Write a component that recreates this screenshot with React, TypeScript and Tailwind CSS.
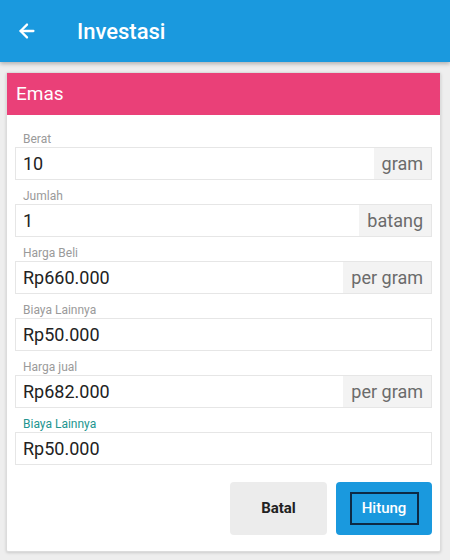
import React from "react";
import { ArrowLeft } from "lucide-react";

type Field = {
  label: string;
  value: string;
  addon?: string;
  active?: boolean;
};

const fields: Field[] = [
  { label: "Berat", value: "10", addon: "gram" },
  { label: "Jumlah", value: "1", addon: "batang" },
  { label: "Harga Beli", value: "Rp660.000", addon: "per gram" },
  { label: "Biaya Lainnya", value: "Rp50.000" },
  { label: "Harga jual", value: "Rp682.000", addon: "per gram" },
  { label: "Biaya Lainnya", value: "Rp50.000", active: true },
];

const FormField: React.FC<{ field: Field }> = ({ field }) => (
  <div className="flex flex-col">
    <label
      className={`h-[16px] pl-[8px] text-[12px] leading-[16px] ${
        field.active ? "text-[#22958f]" : "text-[#9a9a9a]"
      }`}
    >
      {field.label}
    </label>
    <div className="flex h-[33px] border border-[#e6e6e6] bg-white">
      <div className="flex flex-1 items-center pl-[7px] text-[18px] text-[#222]">
        {field.value}
      </div>
      {field.addon && (
        <div className="flex items-center bg-[#f3f3f3] px-[8px] text-[18px] text-[#6b6b6b]">
          {field.addon}
        </div>
      )}
    </div>
  </div>
);

const App: React.FC = () => {
  return (
    <div className="h-[560px] w-[450px] overflow-hidden bg-[#eeeeee] font-['Roboto',sans-serif]">
      <header className="relative z-10 flex h-[62px] items-center bg-[#1a99de] shadow-[0_2px_4px_rgba(0,0,0,0.25)]">
        <ArrowLeft className="ml-[16px] h-[22px] w-[22px] text-white" strokeWidth={2.5} />
        <h1 className="ml-[39px] text-[22px] font-medium text-white">Investasi</h1>
      </header>

      <div className="ml-[6px] mr-[9px] mt-[10px] rounded-[2px] border border-[#dcdcdc] bg-white shadow-[0_1px_3px_rgba(0,0,0,0.15)]">
        <div className="flex h-[42px] items-center bg-[#ea4078] pl-[9px] text-[19px] text-white">
          Emas
        </div>
        <div className="px-[8px] pt-[16px] pb-[16px]">
          <div className="flex flex-col gap-[8px]">
            {fields.map((f, i) => (
              <FormField key={i} field={f} />
            ))}
          </div>
          <div className="mt-[17px] flex justify-end gap-[9px]">
            <button className="h-[53px] w-[97px] rounded-[4px] bg-[#ececec] text-[15px] font-bold text-[#222]">
              Batal
            </button>
            <button className="flex h-[53px] w-[96px] items-center justify-center rounded-[4px] bg-[#1a99de]">
              <span className="flex h-[33px] w-[69px] items-center justify-center border-2 border-[#0d2a45] text-[15px] font-medium text-white">
                Hitung
              </span>
            </button>
          </div>
        </div>
      </div>
    </div>
  );
};

export default App;
